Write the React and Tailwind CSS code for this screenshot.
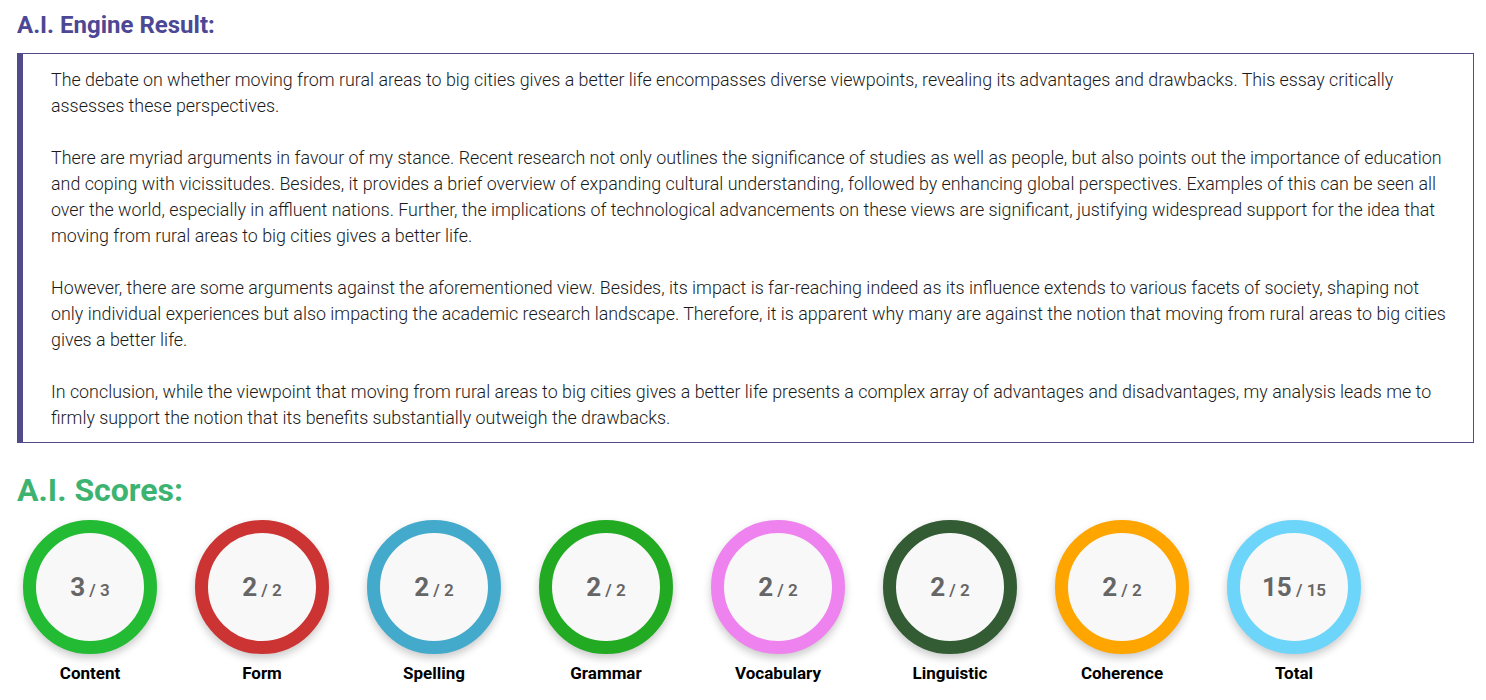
const paragraphs = [
  "The debate on whether moving from rural areas to big cities gives a better life encompasses diverse viewpoints, revealing its advantages and drawbacks. This essay critically assesses these perspectives.",
  "There are myriad arguments in favour of my stance. Recent research not only outlines the significance of studies as well as people, but also points out the importance of education and coping with vicissitudes. Besides, it provides a brief overview of expanding cultural understanding, followed by enhancing global perspectives. Examples of this can be seen all over the world, especially in affluent nations. Further, the implications of technological advancements on these views are significant, justifying widespread support for the idea that moving from rural areas to big cities gives a better life.",
  "However, there are some arguments against the aforementioned view. Besides, its impact is far-reaching indeed as its influence extends to various facets of society, shaping not only individual experiences but also impacting the academic research landscape. Therefore, it is apparent why many are against the notion that moving from rural areas to big cities gives a better life.",
  "In conclusion, while the viewpoint that moving from rural areas to big cities gives a better life presents a complex array of advantages and disadvantages, my analysis leads me to firmly support the notion that its benefits substantially outweigh the drawbacks.",
];

const scores = [
  { label: "Content", score: 3, max: 3, ring: "border-[#22bb33]" },
  { label: "Form", score: 2, max: 2, ring: "border-[#cc3333]" },
  { label: "Spelling", score: 2, max: 2, ring: "border-[#44aacc]" },
  { label: "Grammar", score: 2, max: 2, ring: "border-[#22aa22]" },
  { label: "Vocabulary", score: 2, max: 2, ring: "border-[#ee82ee]" },
  { label: "Linguistic", score: 2, max: 2, ring: "border-[#335c35]" },
  { label: "Coherence", score: 2, max: 2, ring: "border-[#ffa500]" },
  { label: "Total", score: 15, max: 15, ring: "border-[#6dd5fa]" },
];

function ScoreCircle({ label, score, max, ring }) {
  return (
    <div className="flex w-[134px] flex-col items-center">
      <div
        className={`flex h-[134px] w-[134px] items-center justify-center rounded-full border-[13px] bg-[#f8f8f8] shadow-[0_4px_8px_rgba(0,0,0,0.22)] ${ring}`}
      >
        <span className="font-bold text-[#666666]">
          <span className="text-[26px]">{score}</span>
          <span className="text-[17px] font-semibold"> / {max}</span>
        </span>
      </div>
      <div className="mt-[7px] text-[17px] font-bold text-black">{label}</div>
    </div>
  );
}

export default function App() {
  return (
    <div className="bg-white pl-[17px] pr-[12px] pt-[9px] font-['Roboto',sans-serif]">
      <h2 className="text-[24px] font-bold leading-8 text-[#4d4896]">A.I. Engine Result:</h2>
      <div className="mt-[12px] border border-l-[6px] border-[#524b8a] pb-[3px] pl-[28px] pr-[20px] pt-[13px] text-[17.85px] font-light leading-[26px] text-[#1a1a1a]">
        {paragraphs.map((p, i) => (
          <p key={i} className="mb-[26px] last:mb-[8px]">
            {p}
          </p>
        ))}
      </div>
      <h2 className="mt-[27px] text-[32px] font-bold leading-10 text-[#3cb371]">A.I. Scores:</h2>
      <div className="mt-[10px] flex gap-[38px] pl-[6px]">
        {scores.map((s) => (
          <ScoreCircle key={s.label} {...s} />
        ))}
      </div>
    </div>
  );
}
